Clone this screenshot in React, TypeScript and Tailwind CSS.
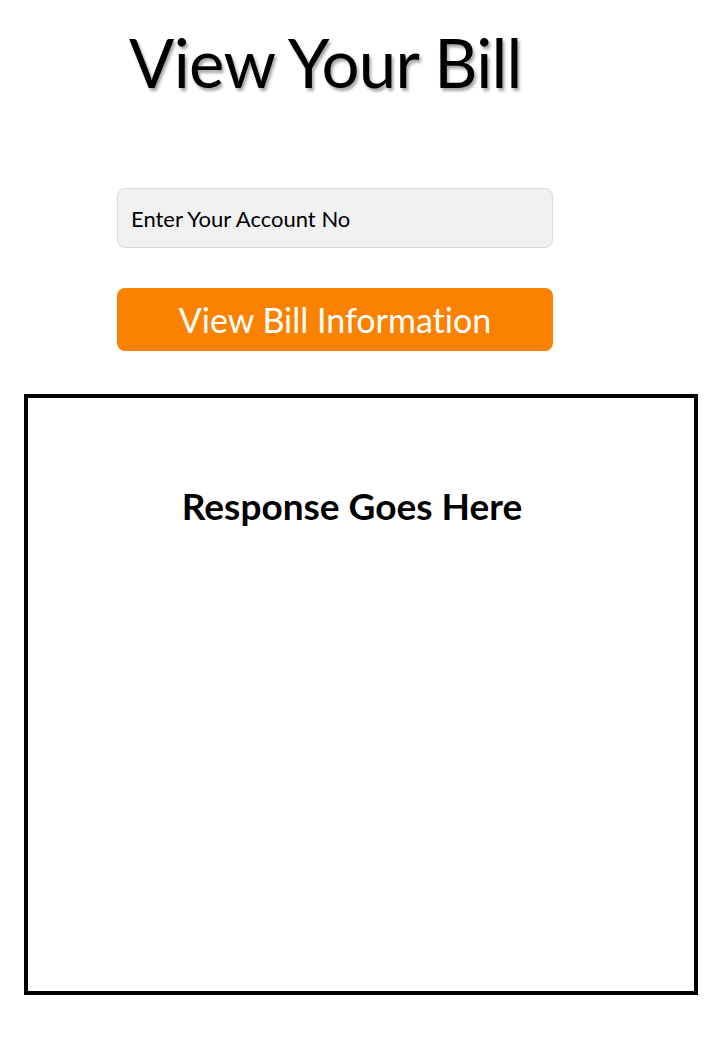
export default function App() {
  return (
    <div className="min-h-[1050px] w-[726px] bg-white font-['Lato','Open_Sans',sans-serif] text-black [font-variant-ligatures:none]">
      <h1 className="ml-[129px] pt-[22px] text-[67px] leading-[80px] font-normal tracking-[-0.7px] [text-shadow:2px_3px_3px_rgba(0,0,0,0.35)]">
        View Your Bill
      </h1>

      <div className="ml-[117px] mt-[86px] flex w-[436px] flex-col">
        <input
          type="text"
          placeholder="Enter Your Account No"
          className="h-[60px] rounded-lg border border-[#d5dbe4] bg-[#f1f1f1] px-[13px] text-[22px] text-black outline-none placeholder:text-black"
        />
        <button className="mt-[40px] h-[63px] rounded-lg bg-[#fb8200] text-[34px] text-white">
          View Bill Information
        </button>
      </div>

      <div className="ml-[24px] mt-[43px] h-[601px] w-[674px] border-[4px] border-black pt-[86px] text-center">
        <h2 className="pr-[18px] text-[37px] font-bold leading-[44px]">Response Goes Here</h2>
      </div>
    </div>
  );
}
